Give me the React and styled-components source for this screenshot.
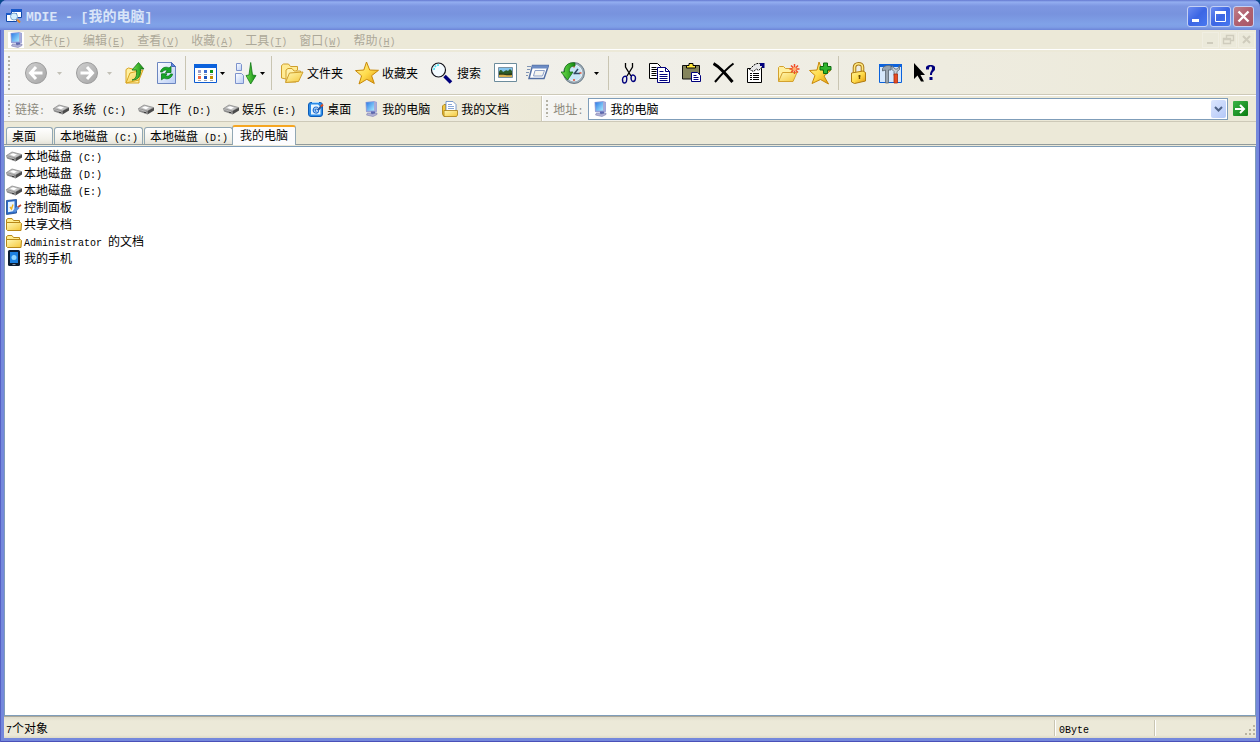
import React, { useState } from 'react';
import styled, { createGlobalStyle } from 'styled-components';

const drives = ['C', 'D', 'E'];

const menus = [
    { name: '文件', hotkey: 'F' },
    { name: '编辑', hotkey: 'E' },
    { name: '查看', hotkey: 'V' },
    { name: '收藏', hotkey: 'A' },
    { name: '工具', hotkey: 'T' },
    { name: '窗口', hotkey: 'W' },
    { name: '帮助', hotkey: 'H' },
];

const tabs = ['桌面', '本地磁盘 (C:)', '本地磁盘 (D:)', '我的电脑'];

/* ---------- text ---------- */

// half-width characters take exactly half the width of a Chinese one
function Txt({ children }) {
    const parts = children.split(/([\x20-\x7e]+)/).filter(Boolean);
    return (
        <Text>
            {parts.map((part, index) => /^[\x20-\x7e]/.test(part)
                ? <Half key={index}>{part}</Half>
                : part)}
        </Text>
    );
}

/* ---------- icons ---------- */

function Defs() {
    return (
        <HiddenSvg width="0" height="0" aria-hidden="true">
            <defs>
                <linearGradient id="folder" x1="0" y1="0" x2="1" y2="1">
                    <stop offset="0" stopColor="#fff8b4" />
                    <stop offset="1" stopColor="#f5c73a" />
                </linearGradient>
                <linearGradient id="star" x1="0" y1="0" x2="1" y2="1">
                    <stop offset="0" stopColor="#fff4a0" />
                    <stop offset=".5" stopColor="#ffdc4c" />
                    <stop offset="1" stopColor="#e09408" />
                </linearGradient>
                <linearGradient id="grey" x1="0" y1="0" x2="1" y2="1">
                    <stop offset="0" stopColor="#d0d0d0" />
                    <stop offset="1" stopColor="#a6a6a6" />
                </linearGradient>
                <linearGradient id="green" x1="0" y1="0" x2="1" y2="0">
                    <stop offset="0" stopColor="#6fe04c" />
                    <stop offset="1" stopColor="#128a12" />
                </linearGradient>
                <linearGradient id="screen" x1="0" y1="0" x2="1" y2="1">
                    <stop offset="0" stopColor="#2c78e4" />
                    <stop offset="1" stopColor="#a6ecff" />
                </linearGradient>
                <linearGradient id="page" x1="0" y1="0" x2="1" y2="1">
                    <stop offset="0" stopColor="#ffffff" />
                    <stop offset="1" stopColor="#b9cdf5" />
                </linearGradient>
            </defs>
        </HiddenSvg>
    );
}

const Svg24 = ({ children }) => <svg width="24" height="24" viewBox="0 0 24 24" aria-hidden="true">{children}</svg>;
const Svg16 = ({ children }) => <svg width="16" height="16" viewBox="0 0 16 16" aria-hidden="true">{children}</svg>;

const BackIcon = () => (
    <Svg24>
        <circle cx="12" cy="12" r="10.500" fill="url(#grey)" stroke="#9c9c9c" />
        <path d="M18.500 12H7M12 6l-5.500 6 5.500 6" fill="none" stroke="#fff" strokeWidth="3" />
    </Svg24>
);

const ForwardIcon = () => (
    <Svg24>
        <circle cx="13" cy="12" r="10.500" fill="url(#grey)" stroke="#9c9c9c" />
        <path d="M6.500 12H18M13 6l5.500 6-5.500 6" fill="none" stroke="#fff" strokeWidth="3" />
    </Svg24>
);

const UpIcon = () => (
    <Svg24>
        <path d="M2 8.500 4.500 7l4 1L10 9h5v13H2z" fill="#fff0a0" stroke="#d9a520" />
        <path d="M2 22 6 12l13-3-4 10z" fill="url(#folder)" stroke="#d9a520" />
        <path d="M8 19c4-1 5-4 4.500-10H8l6.500-7.500L20 8h-3.500c.5 7-2 11-8.500 11z" fill="url(#green)" stroke="#167018" strokeWidth=".8" />
    </Svg24>
);

const RefreshIcon = () => (
    <Svg24>
        <path d="M1.500 1.500h14l4 4v17h-18z" fill="url(#page)" stroke="#6c86c0" />
        <path d="M15.500 1.500v4h4z" fill="#5c86dc" stroke="#4668b8" />
        <path d="M4.500 11c.5-4 5-6 8.500-4l2-1.500v6H9.500l1.800-2C8.500 8.500 7 9.500 6.500 11z" fill="#18a828" stroke="#0a7818" strokeWidth=".8" />
        <path d="M16.500 13c-.5 4-5 6-8.500 4l-2.500 1.800v-6H11l-1.500 2c2.500 1 4.500 0 5-1.800z" fill="#18a828" stroke="#0a7818" strokeWidth=".8" />
    </Svg24>
);

const ViewsIcon = () => (
    <Svg24>
        <path d="M.5 3.500h22v18H.5z" fill="#fff" stroke="#0a5ad2" />
        <path d="M0 3h23v4H0z" fill="#0c62dc" />
        <path d="M4 9h3v3H4z" fill="#9c9cc8" /><path d="M10 9h3v3h-3z" fill="#3c6cd0" /><path d="M16 9h3v3h-3z" fill="#109418" />
        <path d="M4 15h3v3H4z" fill="#f06848" /><path d="M10 15h3v3h-3z" fill="#1850c0" /><path d="M16 15h3v3h-3z" fill="#c89000" />
        <path d="M4 13.500h3M10 13.500h3M16 13.500h3M4 19.500h3M10 19.500h3M16 19.500h3" stroke="#a8a8a8" />
    </Svg24>
);

const SortIcon = () => (
    <Svg24>
        <path d="M2.500 2.500h4l1 1v6h-5z" fill="url(#page)" stroke="#7c92cc" />
        <path d="M1.500 12.500h6l2 2v8h-8z" fill="url(#page)" stroke="#7c92cc" />
        <path d="M15 14 16.700 1.500 18.500 14l3.500.5L16.700 23 12 14.500z" fill="url(#green)" stroke="#0f7a14" strokeWidth=".8" />
    </Svg24>
);

const FoldersIcon = () => (
    <Svg24>
        <path d="M1.500 17V4.500L3.500 3h5l2 2.500h7V9L6 18z" fill="#ffeb94" stroke="#cf9f2c" />
        <path d="M6 21V9l2-1.500h4L14 10h6.500v3L16 21z" fill="#fff2ac" stroke="#cf9f2c" />
        <path d="m5.500 21.500 4-9.500L23 11l-4.500 9.500z" fill="url(#folder)" stroke="#cf9f2c" />
    </Svg24>
);

const StarIcon = () => (
    <Svg24>
        <path d="m11.500 1 3.200 8 8.800.3-6.900 5.400 2.700 7.800-7.500-4.200L4 23l2.600-8.200L.5 9.600l8.300-.6z" fill="url(#star)" stroke="#c88808" strokeLinejoin="round" />
    </Svg24>
);

const SearchIcon = () => (
    <Svg24>
        <path d="m14.500 15 6.500 6.500" stroke="#00007c" strokeWidth="3.500" />
        <circle cx="8.500" cy="9" r="7" fill="#f4fbff" stroke="#101018" strokeWidth="1.200" />
        <path d="M4 9c0-3 2-5 5-5" fill="none" stroke="#40e0f0" strokeWidth="1.500" strokeDasharray="2 1" />
    </Svg24>
);

const PictureIcon = () => (
    <Svg24>
        <path d="M1.500 2.500h22v18h-22z" fill="#fff" stroke="#6c8c9c" />
        <path d="M5.500 6.500h14v10h-14z" fill="#84c4ee" stroke="#7c94a4" />
        <path d="M6 11c1-3 3-2 4 0 2-1 3-3 5-1l2-2 2 2v4H6z" fill="#2c5c28" />
        <path d="M6 13h13v3H6z" fill="#d8b050" />
        <path d="M6 12c4 0 7 2 13 0v2c-5 1-9-1-13 0z" fill="#2c3c18" />
    </Svg24>
);

const RunIcon = () => (
    <Svg24>
        <path d="M7.500 4.500h16l-4.500 13H4z" fill="#fff" stroke="#5470a4" strokeWidth="1.500" />
        <path d="M7.500 4.500h16l-1 3H6.500z" fill="#6c8cc4" />
        <path d="M10 9.500h9.500l-2 5.500H8.500z" fill="#f4f4f0" stroke="#8ca0c8" />
        <path d="M2 5.500h4M2 8.500h3M1 11.500h3M1 14.500h2" stroke="#8094b4" />
    </Svg24>
);

const HistoryIcon = () => (
    <Svg24>
        <circle cx="13" cy="12" r="10.500" fill="#9cacb8" stroke="#6c7c88" />
        <circle cx="13" cy="12" r="8" fill="#c8e6f8" stroke="#e8f2f8" />
        <path d="m13 13 4-5M12.500 12.500H19" stroke="#304864" strokeWidth="1.500" />
        <path d="M13 4.500v2M13 18v2M20.500 12h-2" stroke="#e05030" strokeWidth="1.500" />
        <path d="M14 2C7 1 3 5 3.500 11H0l6.500 8L12 11H8.500C8 7 10 5 14 5z" fill="url(#green)" stroke="#167018" strokeWidth=".8" />
    </Svg24>
);

const CutIcon = () => (
    <Svg24>
        <path d="M8.500 2v4L14 15M15.500 2v4L10 15" fill="none" stroke="#000" strokeWidth="1.300" />
        <path d="M9.500 15.500c-2-1-4 .5-4 3s.5 3.500 2 3.500 3-2 2-6.500zM14.500 14.500c2-1.500 4 .5 4 2.500s-1 3.500-2.500 3.500-2.500-3-1.500-6z" fill="none" stroke="#00007c" strokeWidth="1.400" />
    </Svg24>
);

const CopyIcon = () => (
    <Svg24>
        <path d="M.5 2.500h8l3 3v12H.5z" fill="#fff" stroke="#000" />
        <path d="M2.500 6.500h5M2.500 8.500h6M2.500 10.500h5M2.500 12.500h5M2.500 14.500h5" stroke="#000" />
        <path d="M8.500 6.500h8l4 4v11h-12z" fill="#fff" stroke="#00007c" />
        <path d="M16.500 6.500v4h4M10.500 10.500h4M10.500 13.500h8M10.500 15.500h8M10.500 17.500h8M10.500 19.500h8" fill="none" stroke="#00007c" />
    </Svg24>
);

const PasteIcon = () => (
    <Svg24>
        <path d="M1.500 4.500h17V18h-17z" fill="#84845c" stroke="#101010" />
        <path d="M5.500 7V4.500H8V2.500h4v2h2.500V7z" fill="#ffe83c" stroke="#000" />
        <path d="M10.500 11.500h6l3 3v6h-9z" fill="#fff" stroke="#00007c" />
        <path d="M12.500 14.500h3M12.500 16.500h5M12.500 18.500h5" stroke="#00007c" />
    </Svg24>
);

const DeleteIcon = () => (
    <Svg24>
        <path d="M.5 2.500C7 6 13 13 19.500 21" fill="none" stroke="#000" strokeWidth="3" />
        <path d="M20.500 2.500C13 8 8 14 2 21" fill="none" stroke="#000" strokeWidth="2" />
    </Svg24>
);

const PropertiesIcon = () => (
    <Svg24>
        <path d="M2.500 7.500h14v14h-14z" fill="#fff" stroke="#000" />
        <path d="M5 12.500h2M8 12.500h6M5 14.500h2M8 14.500h6M5 16.500h2M8 16.500h6M5 18.500h2M8 18.500h6" stroke="#000" />
        <path d="M4.500 8.500 9 4l3-1.500h5v4l-3.500 3-2-1.500-3 2.500z" fill="#e8e8e8" stroke="#000" strokeDasharray="2 1" />
        <path d="M15 2h4.500v5H17V5h-2z" fill="#00007c" />
    </Svg24>
);

const NewFolderIcon = () => (
    <Svg24>
        <path d="M1.500 20V6.500l1-1h4l2 2H15V20z" fill="#fff0a0" stroke="#d3a12e" />
        <path d="m1.500 20.500 4-9H20l-4 9z" fill="url(#folder)" stroke="#d3a12e" />
        <path d="M17.500 3v10M12.500 8h10M14 4.500l7 7M21 4.500l-7 7" stroke="#f04c28" strokeWidth="1.500" />
        <circle cx="17.500" cy="8" r="2" fill="#ffb070" />
    </Svg24>
);

const AddFavoriteIcon = () => (
    <Svg24>
        <path d="m10 1 3 8 8.500.6-6.500 5.400 4.500 8-8-4.500L3 22.500l3-8L.5 9.500 8 9z" fill="url(#star)" stroke="#c88808" strokeLinejoin="round" />
        <path d="M14.500 2h4v3.500H22v3.500h-3.500v3.500h-4V9H11V5.500h3.500z" fill="#2fb52f" stroke="#0c6c10" />
    </Svg24>
);

const LockIcon = () => (
    <Svg24>
        <path d="M7.500 12V6.500c0-5 8-5 8-.5v5" fill="none" stroke="#a87818" strokeWidth="3.600" />
        <path d="M7.500 12V6.500c0-5 8-5 8-.5v5" fill="none" stroke="#ffe880" strokeWidth="1.600" />
        <path d="M4.500 12 16 10l2.500 1.500V20L7.500 22.500 4.500 21z" fill="url(#star)" stroke="#b07c10" />
        <path d="M12.500 14v4M11.500 15h2" stroke="#6c4c00" strokeWidth="1.400" />
    </Svg24>
);

const ToolsIcon = () => (
    <Svg24>
        <path d="M.5 3.500h22v18H.5z" fill="#d6e8fc" stroke="#0a62dc" />
        <path d="M0 3h23v3H0z" fill="#0c62dc" />
        <path d="M3.500 7.500C5 4.500 9 4 12 5v4H9.500V22h-3V9L3.500 10z" fill="#98a4b0" stroke="#586470" strokeWidth=".8" />
        <path d="M13 4.500v4l2 2v4h3v-4l2.500-2v-4L18.500 8H16z" fill="#c4ccd4" stroke="#586470" strokeWidth=".8" />
        <path d="M15 13h3.500v9H15z" fill="#e84c20" stroke="#a42c10" strokeWidth=".8" />
    </Svg24>
);

const HelpIcon = () => (
    <Svg24>
        <path d="M3 2v16l3.500-3.500 3.500 6h3L9.500 14H14z" fill="#000" />
        <path d="M15 8.500V6c1-1.500 2.500-2 4.500-2C22.500 4 25 5 24 8.500c-.6 2-3 2-3 5.500h-2c0-4 2-4 2-6.500 0-1.500-.5-2-1.500-2s-1.500.6-1.500 3z" fill="#00007c" />
        <path d="M18.500 16h3v3h-3z" fill="#00007c" />
    </Svg24>
);

const DriveIcon = () => (
    <Svg16>
        <path d="M.5 7.500 6 4l9.500 2.500-6 3.500z" fill="#c4c4c4" stroke="#8c8c8c" strokeWidth=".8" />
        <path d="M0 7.500 9.500 10v3.500L1 10.500z" fill="#8c8c8c" />
        <path d="m9.500 10 6.500-3.500V9.500l-6.500 4z" fill="#4a4a4a" />
        <path d="m4 6.800 3-1.500 4 1.200-3 1.700z" fill="#fff" />
        <path d="M1 8.500 8 10.500" stroke="#b8b8b8" />
        <path d="M6 11.500h2" stroke="#404040" />
    </Svg16>
);

const ComputerIcon = () => (
    <Svg16>
        <path d="M2.500 1 11 0l3 1v9.500l-2 1.500-9-1z" fill="#98a0d8" />
        <path d="M3.200 1.500 11 1v8.500L4 9.800z" fill="url(#screen)" />
        <path d="m11 1 2.500.5v9L11 11z" fill="#a8acd8" />
        <path d="M8 10.500h4V13H8z" fill="#5c68b0" />
        <path d="m4.500 12 5 1L14 12v1.500L10 15.500 3.500 14z" fill="#b4b4d8" stroke="#7c7cac" strokeWidth=".6" />
    </Svg16>
);

const DesktopIcon = () => (
    <Svg16>
        <rect x=".5" y="1.500" width="14" height="14" rx="2.500" fill="#2c8ce8" stroke="#0c5cb8" />
        <path d="M3 3.500h7l2.500 2.500v7.500H3z" fill="#e8f6ff" />
        <path d="M10 6.500C5 4 3.500 11.500 7.500 12S11 8 8.500 8 7 10 8.500 10.500" fill="none" stroke="#1c6cd0" strokeWidth="1.200" />
        <path d="m10 9 3.500-4" stroke="#2858a0" strokeWidth="2" />
        <path d="m13 5.500 2-2" stroke="#e05020" strokeWidth="2" />
        <path d="M4 1.500h7" stroke="#a8d8ff" />
    </Svg16>
);

const DocumentsIcon = () => (
    <Svg16>
        <path d="M.5 5 2 3.500h2V15H1.500L.5 13z" fill="#f4c83c" stroke="#a87c10" strokeWidth=".8" />
        <path d="M4 .5h7l3 3V11H4z" fill="#fff" stroke="#5c84c0" strokeWidth=".8" />
        <path d="M6 3.500h4M6 5.500h6M6 7.500h6" stroke="#88a8d8" />
        <path d="M2 9.500h13.500V14l-1 1.500H2z" fill="url(#folder)" stroke="#a87c10" strokeWidth=".8" />
    </Svg16>
);

const ControlPanelIcon = () => (
    <Svg16>
        <path d="m.5 1.500 10-1V14L.5 15.500z" fill="#2c6cc8" stroke="#1c4890" strokeWidth=".8" />
        <path d="m2 3 6.500-.8v9.800L2 13.300z" fill="#e4f2ff" />
        <path d="m4 8 1.500 2L7 5.500" fill="none" stroke="#f0b020" strokeWidth="1.400" />
        <path d="M8 12.500 12.500 8" stroke="#5890dc" strokeWidth="3" />
        <path d="m12 8 3-2" stroke="#c84828" strokeWidth="1.800" />
    </Svg16>
);

const FolderIcon = () => (
    <Svg16>
        <path d="M.5 13V3.500L2 2.500h4l1.500 2h6v8.500z" fill="#ffec8c" stroke="#b88818" />
        <path d="M.5 6.500h14l1 1-.5 7H1.500l-1-1z" fill="url(#folder)" stroke="#b88818" />
    </Svg16>
);

const PhoneIcon = () => (
    <Svg16>
        <rect x="2" y="0" width="12" height="16" rx="1.500" fill="#0c1c30" />
        <path d="M4 2h8v11H4z" fill="#1c80e0" />
        <circle cx="8" cy="7.500" r="2.500" fill="#8cd4ff" />
        <path d="M6.500 14.500h3" stroke="#8898a8" />
    </Svg16>
);

const AppIcon = () => (
    <Svg16>
        <path d="M5.500 1.500h10v8h-10z" fill="#fff" stroke="#1048a8" /><path d="M5 1h11v3H5z" fill="#1858c8" />
        <path d="M.5 5.500h10v8H.5z" fill="#fff" stroke="#1048a8" /><path d="M0 5h11v2H0z" fill="#1858c8" />
        <circle cx="8" cy="8.500" r="3.500" fill="#d4f0ff" stroke="#80a8d0" />
        <path d="m11 11.500 3 3" stroke="#e08830" strokeWidth="2" />
    </Svg16>
);

const Arrow = () => <svg width="5" height="3" viewBox="0 0 5 3" aria-hidden="true"><path d="M0 0h5L2.500 3z" fill="currentColor" /></svg>;

/* ---------- parts ---------- */

function Tool({ icon, label, title, split, wide, disabled }) {
    return (
        <>
            <ToolButton title={title} $split={split} $label={label} disabled={disabled}>
                {icon}
                {label && <Txt>{label}</Txt>}
            </ToolButton>
            {(split || wide) && <DropButton $wide={wide} disabled={disabled} aria-label={title + '选项'}><Arrow /></DropButton>}
        </>
    );
}

function TitleBar() {
    return (
        <TitleRow>
            <AppIcon />
            <Title>MDIE - [<b>我的电脑</b>]</Title>
            <TitleButton aria-label="最小化">
                <svg width="19" height="19"><path d="M4 12h7v3H4z" fill="#fff" /></svg>
            </TitleButton>
            <TitleButton aria-label="最大化">
                <svg width="19" height="19"><path d="M4.500 4.500h10v10h-10z" fill="none" stroke="#fff" /><path d="M4 4h11v3H4z" fill="#fff" /></svg>
            </TitleButton>
            <TitleButton aria-label="关闭" $close>
                <svg width="19" height="19"><path d="m4.500 4.500 10 10M14.500 4.500l-10 10" stroke="#fff" strokeWidth="2.400" /></svg>
            </TitleButton>
        </TitleRow>
    );
}

function MenuBar() {
    return (
        <MenuRow>
            <MenuIcon><ComputerIcon /></MenuIcon>
            {menus.map((menu) => (
                <MenuButton key={menu.hotkey}>{menu.name}<Half>(<u>{menu.hotkey}</u>)</Half></MenuButton>
            ))}
            <ChildButtons>
                <ChildButton aria-label="最小化子窗口"><svg width="15" height="14"><path d="M4 9h6v2H4z" fill="#cfccbd" /></svg></ChildButton>
                <ChildButton aria-label="还原子窗口"><svg width="15" height="14"><path d="M5.500 5V2.500h7v5H10M2.500 5.500h7v5h-7zM2.500 6.500h7" fill="none" stroke="#cfccbd" strokeWidth="1.400" /></svg></ChildButton>
                <ChildButton aria-label="关闭子窗口"><svg width="15" height="14"><path d="m4 3 7 7M11 3l-7 7" stroke="#cfccbd" strokeWidth="2" /></svg></ChildButton>
            </ChildButtons>
        </MenuRow>
    );
}

function ToolBar() {
    return (
        <ToolRow>
            <Grip />
            <Tool title="后退" icon={<BackIcon />} wide disabled />
            <Tool title="前进" icon={<ForwardIcon />} wide disabled />
            <Tool title="向上" icon={<UpIcon />} />
            <Tool title="刷新" icon={<RefreshIcon />} />
            <Separator />
            <Tool title="查看" icon={<ViewsIcon />} split />
            <Tool title="排序" icon={<SortIcon />} split />
            <Separator />
            <Tool title="文件夹" icon={<FoldersIcon />} label="文件夹" />
            <Tool title="收藏夹" icon={<StarIcon />} label="收藏夹" />
            <Tool title="搜索" icon={<SearchIcon />} label="搜索" />
            <Tool title="图片" icon={<PictureIcon />} />
            <Tool title="运行" icon={<RunIcon />} />
            <HistoryGroup><Tool title="历史" icon={<HistoryIcon />} wide /></HistoryGroup>
            <Separator />
            <Tool title="剪切" icon={<CutIcon />} />
            <Tool title="复制" icon={<CopyIcon />} />
            <Tool title="粘贴" icon={<PasteIcon />} />
            <Tool title="删除" icon={<DeleteIcon />} />
            <Tool title="属性" icon={<PropertiesIcon />} />
            <Tool title="新建文件夹" icon={<NewFolderIcon />} />
            <Tool title="添加到收藏夹" icon={<AddFavoriteIcon />} />
            <Separator />
            <Tool title="锁定" icon={<LockIcon />} />
            <Tool title="选项" icon={<ToolsIcon />} />
            <Tool title="帮助" icon={<HelpIcon />} />
        </ToolRow>
    );
}

function LinkBar() {
    const links = [
        { name: '系统 (C:)', icon: <DriveIcon /> },
        { name: '工作 (D:)', icon: <DriveIcon /> },
        { name: '娱乐 (E:)', icon: <DriveIcon /> },
        { name: '桌面', icon: <DesktopIcon /> },
        { name: '我的电脑', icon: <ComputerIcon /> },
        { name: '我的文档', icon: <DocumentsIcon /> },
    ];

    return (
        <LinkRow>
            <LinkBand>
                <Grip />
                <BandLabel as="span"><Txt>链接:</Txt></BandLabel>
                {links.map((link) => <LinkButton key={link.name}>{link.icon}<Txt>{link.name}</Txt></LinkButton>)}
            </LinkBand>
            <AddressBand>
                <Grip />
                <BandLabel htmlFor="address"><Txt>地址:</Txt></BandLabel>
                <AddressBox>
                    <ComputerIcon />
                    <AddressSelect id="address" defaultValue="我的电脑">
                        <option>我的电脑</option>
                    </AddressSelect>
                    <SelectArrow>
                        <svg width="9" height="6" viewBox="0 0 9 6"><path d="m1 1 3.500 3.500L8 1" fill="none" stroke="#4d6185" strokeWidth="2" /></svg>
                    </SelectArrow>
                </AddressBox>
                <GoButton aria-label="转到">
                    <svg width="14" height="14" viewBox="0 0 14 14"><path d="M2 7h9M7 3l4 4-4 4" fill="none" stroke="#fff" strokeWidth="2" /></svg>
                </GoButton>
            </AddressBand>
        </LinkRow>
    );
}

function App() {
    const [activeTab, setActiveTab] = useState('我的电脑');

    return (
        <Window>
            <GlobalStyle />
            <Defs />
            <TitleBar />
            <Client>
                <MenuBar />
                <ToolBar />
                <LinkBar />
                <TabRow>
                    {tabs.map((tab) => (
                        <Tab key={tab} $active={tab === activeTab} onClick={() => setActiveTab(tab)}><Txt>{tab}</Txt></Tab>
                    ))}
                </TabRow>
                <FileList>
                    {drives.map((drive) => <FileItem key={drive}><DriveIcon /><Txt>{`本地磁盘 (${drive}:)`}</Txt></FileItem>)}
                    <FileItem><ControlPanelIcon /><Txt>控制面板</Txt></FileItem>
                    <FileItem><FolderIcon /><Txt>共享文档</Txt></FileItem>
                    <FileItem><FolderIcon /><Txt>Administrator 的文档</Txt></FileItem>
                    <FileItem><PhoneIcon /><Txt>我的手机</Txt></FileItem>
                </FileList>
                <StatusBar>
                    <StatusMain><Txt>7个对象</Txt></StatusMain>
                    <StatusCell><Txt>0Byte</Txt></StatusCell>
                    <StatusCell $last>
                        <svg width="12" height="12" viewBox="0 0 12 12"><path d="M9 1h2v2H9zM9 5h2v2H9zM5 5h2v2H5zM9 9h2v2H9zM5 9h2v2H5zM1 9h2v2H1z" fill="#b8b4a2" /></svg>
                    </StatusCell>
                </StatusBar>
            </Client>
        </Window>
    );
}

export default App;

/* ---------- styles ---------- */

const GlobalStyle = createGlobalStyle`
    * {
        box-sizing: border-box;
    }

    body {
        margin: 0;
        background: #0a4a8c;
        font: 12px/16px "Noto Sans CJK SC", sans-serif;
        color: #000;
    }

    button, select {
        font: inherit;
        color: inherit;
        margin: 0;
        padding: 0;
        border: none;
        background: none;
        white-space: nowrap;
    }

    svg {
        display: block;
        flex: none;
    }
`

const HiddenSvg = styled.svg`
    position: absolute;
`

const Text = styled.span`
    white-space: pre;
    line-height: 16px;
`

const Half = styled.span`
    font-family: "Liberation Mono", monospace;
    font-size: 10px;
    line-height: 0;
    white-space: pre;
`

const Window = styled.div`
    display: flex;
    flex-direction: column;
    min-height: 100vh;
    background: #7488dc;
    border-radius: 7px 7px 0 0;
    box-shadow: inset 1px 0 #5560c4, inset -1px 0 #4a50b8, inset 0 -1px #4a50b8;
    overflow: hidden;
`

const TitleRow = styled.header`
    display: flex;
    align-items: center;
    gap: 2px;
    height: 30px;
    padding: 2px 6px 0;
    background: linear-gradient(#6478d0 0, #93aef0 2px, #7d97e2 6px, #7893de 14px, #80a2e8 24px, #7e9ee6 27px, #6c84d8 30px);
`

const Title = styled.h1`
    flex: 1;
    margin: 0;
    padding-left: 2px;
    font: bold 13px/16px "Liberation Mono", monospace;
    color: #d8e4f8;
    white-space: pre;

    b {
        font: bold 14px/16px "Noto Sans CJK SC", sans-serif;
    }
`

const TitleButton = styled.button`
    width: 21px;
    height: 21px;
    border: 1px solid #c4d0f4;
    border-radius: 3px;
    background: ${props => props.$close
        ? 'linear-gradient(135deg, #c08088, #b06070 50%, #a85868)'
        : 'linear-gradient(135deg, #6c8cf0, #3c66e4 50%, #4878f0)'};
`

const Client = styled.main`
    flex: 1;
    display: flex;
    flex-direction: column;
    margin: 0 4px 4px;
    background: #ece9d8;
`

const MenuRow = styled.nav`
    display: flex;
    align-items: center;
    height: 20px;
    padding-left: 4px;
    border-bottom: 1px solid #fff;
    color: #aca899;
`

const MenuIcon = styled.span`
    background: #fff;
    margin-right: -1px;
`

const MenuButton = styled.button`
    padding: 0 6px;
    line-height: 18px;
`

const ChildButtons = styled.div`
    display: flex;
    gap: 1px;
    margin-left: auto;
    padding-right: 1px;
`

const ChildButton = styled.button`
    width: 17px;
    height: 16px;
    border: 1px solid #f0eee2;
    background: #ebe9da;
`

const ToolRow = styled.div`
    display: flex;
    align-items: center;
    height: 45px;
    padding-left: 4px;
    background: linear-gradient(90deg, #f5f5f4, #f0efe8 50%, #ece9d8);
    border-top: 2px solid #ece9d8;
    border-bottom: 1px solid #cdc9b8;
`

const Grip = styled.span`
    flex: none;
    align-self: stretch;
    width: 2px;
    margin: 4px 10px 4px 0;
    background: repeating-linear-gradient(#b4b1a4 0, #b4b1a4 2px, transparent 2px, transparent 4px);
`

const Separator = styled.span`
    flex: none;
    align-self: stretch;
    width: 1px;
    margin: 4px 4px 4px 1px;
    background: #c9c5b2;
`

const ToolButton = styled.button`
    display: flex;
    align-items: center;
    gap: 3px;
    height: 32px;
    padding: 0 ${props => props.$label ? 8 : props.$split ? 2 : 4}px 0 4px;
`

const DropButton = styled.button`
    display: flex;
    align-items: center;
    width: ${props => props.$wide ? 18 : 10}px;
    height: 32px;
    padding-left: ${props => props.$wide ? 5 : 0}px;

    &:disabled {
        color: #c2c0b6;
    }
`

const HistoryGroup = styled.span`
    display: flex;
    padding-left: 4px;
`

const LinkRow = styled.div`
    display: flex;
    height: 27px;
    border-top: 1px solid #fff;
    border-bottom: 1px solid #cdc9b8;
`

const LinkBand = styled.div`
    flex: 0 0 43%;
    display: flex;
    align-items: center;
    padding-left: 4px;
    background: linear-gradient(90deg, #f5f5f4, #ece9d8);
    border-right: 1px solid #cdc9b8;

    ${Grip} {
        margin-right: 5px;
    }
`

const AddressBand = styled.div`
    flex: 1;
    display: flex;
    align-items: center;
    padding: 0 8px 0 3px;
    background: linear-gradient(90deg, #f5f5f4, #ece9d8 30%);
    border-left: 1px solid #fff;

    ${Grip} {
        margin-right: 5px;
    }
`

const BandLabel = styled.label`
    padding-right: 2px;
    color: #8c897c;
`

const LinkButton = styled.button`
    display: flex;
    align-items: center;
    gap: 3px;
    height: 22px;
    padding: 0 6px;
`

const AddressBox = styled.div`
    flex: 1;
    display: flex;
    align-items: center;
    height: 22px;
    margin: 0 5px 0 3px;
    padding: 0 1px 0 3px;
    background: #fff;
    border: 1px solid #7f9db9;
`

const AddressSelect = styled.select`
    flex: 1;
    height: 18px;
    padding-left: 2px;
    appearance: none;
    outline: none;
`

const SelectArrow = styled.span`
    display: grid;
    place-items: center;
    width: 15px;
    height: 18px;
    border-radius: 2px;
    background: linear-gradient(135deg, #dce6fe, #b4c8f8);
    pointer-events: none;
`

const GoButton = styled.button`
    width: 15px;
    height: 15px;
    border-radius: 1px;
    background: linear-gradient(135deg, #3cb448, #087c10);
`

const TabRow = styled.div`
    display: flex;
    align-items: flex-end;
    gap: 1px;
    height: 23px;
    padding: 0 2px;
    border-bottom: 1px solid #919b9c;
`

const Tab = styled.button`
    min-width: 47px;
    height: ${props => props.$active ? 20 : 17}px;
    padding: ${props => props.$active ? '0 7px 2px' : '0 4px 0 5px'};
    margin: ${props => props.$active ? '0 0 -1px -2px' : 0};
    border: 1px solid #91a7b4;
    border-top: ${props => props.$active ? '2px solid #f5a623' : '1px solid #91a7b4'};
    border-bottom: none;
    border-radius: 3px 3px 0 0;
    background: ${props => props.$active ? '#fcfcfe' : 'linear-gradient(#fff, #f2f1ea 70%, #e4e2d8)'};
    text-align: left;
`

const FileList = styled.ul`
    flex: 1;
    margin: 1px 0 0;
    padding: 0 1px;
    list-style: none;
    background: #fff;
    border: 1px solid #7f9db9;
`

const FileItem = styled.li`
    display: flex;
    align-items: center;
    gap: 2px;
    height: 17px;
`

const StatusBar = styled.footer`
    display: flex;
    align-items: center;
    height: 22px;
    border-top: 1px solid #aca899;
    background: linear-gradient(#dedbcb, #ece9d8 4px, #ece9d8 18px, #dedbc8);
`

const StatusMain = styled.span`
    flex: 1;
    padding-left: 2px;
`

const StatusCell = styled.span`
    display: flex;
    align-items: flex-end;
    justify-content: ${props => props.$last ? 'flex-end' : 'flex-start'};
    width: ${props => props.$last ? 102 : 100}px;
    height: 16px;
    padding-left: 4px;
    border-left: 1px solid #c9c5b2;
    box-shadow: inset 1px 0 #fff;
`
